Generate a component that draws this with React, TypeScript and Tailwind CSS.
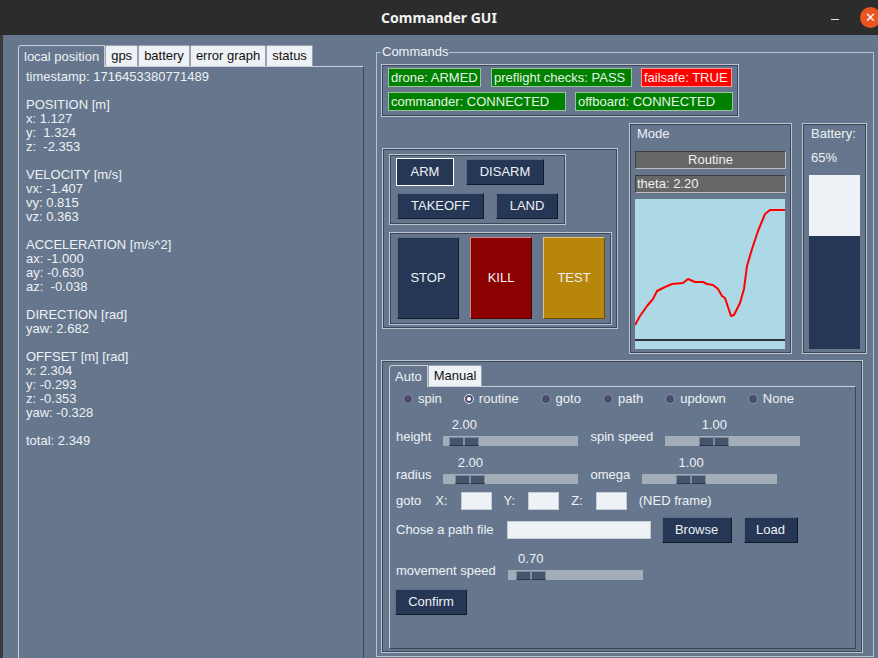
import React from 'react';

const leftLines = [
  'timestamp: 1716453380771489',
  '',
  'POSITION [m]',
  'x: 1.127',
  'y:  1.324',
  'z:  -2.353',
  '',
  'VELOCITY [m/s]',
  'vx: -1.407',
  'vy: 0.815',
  'vz: 0.363',
  '',
  'ACCELERATION [m/s^2]',
  'ax: -1.000',
  'ay: -0.630',
  'az:  -0.038',
  '',
  'DIRECTION [rad]',
  'yaw: 2.682',
  '',
  'OFFSET [m] [rad]',
  'x: 2.304',
  'y: -0.293',
  'z: -0.353',
  'yaw: -0.328',
  '',
  'total: 2.349',
];

const frame =
  'border border-[#bcc5cf] shadow-[inset_1px_1px_0_#3c4859,inset_-1px_-1px_0_#3c4859]';

const btn =
  'bg-[#263755] border border-[#5f6e87] border-r-[#121a2a] border-b-[#121a2a] text-[#eef1f5] flex items-center justify-center';

function StatusLabel({ text, width, red }: { text: string; width: string; red?: boolean }) {
  return (
    <div
      className={`${width} h-[19px] pl-[2px] flex items-center whitespace-nowrap border ${
        red ? 'bg-[#ff0000] border-[#ff9a9a] text-[#fff0f0]' : 'bg-[#008000] border-[#9cc49c] text-[#e6f6e6]'
      }`}
    >
      {text}
    </div>
  );
}

function Slider({ value, offset }: { value: string; offset: string }) {
  return (
    <div className="w-[135px] flex flex-col">
      <div className={`${offset} w-[30px] text-center`}>{value}</div>
      <div className="mt-[4px] h-[10px] bg-[#a3adb8] flex items-end">
        <div className={`${offset} w-[30px] h-[9px] flex`}>
          <div className="flex-1 bg-[#46546b] border border-[#7d8aa0] border-b-[#2b3547]" />
          <div className="flex-1 bg-[#46546b] border border-[#7d8aa0] border-b-[#2b3547]" />
        </div>
      </div>
    </div>
  );
}

function Radio({ label, on }: { label: string; on?: boolean }) {
  return (
    <div className="flex items-center">
      <div
        className={`w-[10px] h-[10px] rounded-full border flex items-center justify-center ${
          on ? 'bg-[#4b4d70] border-[#e4e7ee]' : 'bg-[#4b4d70] border-[#8a8fa8]'
        }`}
      >
        {on && <div className="w-[4px] h-[4px] rounded-full bg-white" />}
      </div>
      <span className="ml-[5px]">{label}</span>
    </div>
  );
}

function Graph() {
  const pts =
    '0,126 5,117 12,107 18,100 22,92 30,88 37,85 48,84 53,80 60,83 68,83 72,85 78,86 83,90 87,97 90,99 96,117 99,116 105,104 109,90 112,67 117,50 123,32 130,15 135,11 150,11';
  return (
    <svg width="150" height="150" viewBox="0 0 150 150" className="block bg-[#add8e6]">
      <line x1="0" y1="141" x2="150" y2="141" stroke="#000" strokeWidth="1.5" />
      <polyline points={pts} fill="none" stroke="#ff0000" strokeWidth="2" strokeLinejoin="round" />
    </svg>
  );
}

export default function App() {
  return (
    <div className="w-[878px] h-[658px] overflow-hidden flex flex-col bg-[#2c2c2c] font-['Liberation_Sans',Arial,sans-serif] text-[13px] leading-[14px] text-[#eef1f5]">
      {/* title bar */}
      <div className="h-[35px] shrink-0 grid grid-cols-[1fr_auto_1fr] items-center">
        <div />
        <div className="font-['Noto_Sans',sans-serif] font-bold text-[14px] text-[#f2f2f2]">Commander GUI</div>
        <div className="flex items-center justify-end">
          <div className="w-[8px] h-[1.5px] bg-[#e8e8e8] mt-[4px]" />
          <div className="ml-[21px] mr-[-3px] w-[21px] h-[21px] rounded-full bg-[#e95420] flex items-center justify-center text-white text-[13px] font-['DejaVu_Sans',sans-serif]">
            ✕
          </div>
        </div>
      </div>

      <div className="flex-1 min-h-0 flex bg-[#66778d] border-l-[3px] border-[#3b3b3b]">
        {/* left notebook */}
        <div className="ml-[15px] mt-[10px] w-[346px] flex flex-col">
          <div className="flex items-start h-[21px]">
            <div className="relative z-10 h-[22px] px-[5px] flex items-center bg-[#66778d] border border-b-0 border-[#c9d0d8] rounded-tl-[3px]">
              local position
            </div>
            {['gps', 'battery', 'error graph', 'status'].map((t) => (
              <div
                key={t}
                className="h-[21px] px-[5px] flex items-center bg-[#eef1f5] text-[#111] border border-b-0 border-[#9aa4b0] rounded-t-[2px]"
              >
                {t}
              </div>
            ))}
          </div>
          <div className="flex-1 border border-b-0 border-[#c9d0d8] border-r-[#3a4556] pl-[7px] pt-[3px]">
            {leftLines.map((l, i) => (
              <div key={i} className="h-[14px] whitespace-pre">
                {l}
              </div>
            ))}
          </div>
        </div>

        {/* commands */}
        <fieldset className="ml-[12px] mt-[10px] mb-[1px] w-[498px] border border-[#b9c2cc] pl-[4px] pr-[5px] pt-[5px] pb-[3px] flex flex-col">
          <legend className="px-[1px] leading-[14px]">Commands</legend>

          <div className={`${frame} w-[358px] h-[53px] pl-[6px] pt-[3px] flex flex-col gap-[5px]`}>
            <div className="flex">
              <StatusLabel text="drone: ARMED" width="w-[93px]" />
              <div className="ml-[10px]">
                <StatusLabel text="preflight checks: PASS" width="w-[141px]" />
              </div>
              <div className="ml-[9px]">
                <StatusLabel text="failsafe: TRUE" width="w-[91px]" red />
              </div>
            </div>
            <div className="flex">
              <StatusLabel text="commander: CONNECTED" width="w-[178px]" />
              <div className="ml-[9px]">
                <StatusLabel text="offboard: CONNECTED" width="w-[158px]" />
              </div>
            </div>
          </div>

          <div className="mt-[6px] h-[231px] flex items-center">
            {/* controls */}
            <div className={`${frame} ml-[1px] w-[236px] h-[181px] pl-[6px] pt-[5px] flex flex-col`}>
              <div className={`${frame} w-[177px] h-[71px] pl-[6px] pt-[3px] flex flex-col`}>
                <div className="flex items-center h-[28px]">
                  <div className={`${btn} w-[58px] h-[28px] border-white border-r-white border-b-white`}>ARM</div>
                  <div className={`${btn} ml-[12px] w-[78px] h-[26px]`}>DISARM</div>
                </div>
                <div className="flex items-center mt-[7px]">
                  <div className={`${btn} ml-[1px] w-[87px] h-[26px]`}>TAKEOFF</div>
                  <div className={`${btn} ml-[12px] w-[62px] h-[26px]`}>LAND</div>
                </div>
              </div>
              <div className={`${frame} mt-[7px] w-[223px] h-[93px] pl-[7px] pt-[4px] flex gap-[11px]`}>
                <div className={`${btn} w-[62px] h-[82px]`}>STOP</div>
                <div className="w-[62px] h-[82px] bg-[#8b0000] border border-[#c98a8a] border-r-[#4a0000] border-b-[#4a0000] flex items-center justify-center">
                  KILL
                </div>
                <div className="w-[62px] h-[82px] bg-[#b8860b] border border-[#e6c47a] border-r-[#6b4d00] border-b-[#6b4d00] flex items-center justify-center">
                  TEST
                </div>
              </div>
            </div>

            {/* mode */}
            <div className={`${frame} ml-[11px] w-[163px] h-[231px] px-[5px] pt-[3px] flex flex-col`}>
              <div className="pl-[2px] h-[14px]">Mode</div>
              <div className="mt-[10px] h-[18px] bg-[#666666] border border-[#3e3e3e] border-r-[#bdbdbd] border-b-[#bdbdbd] flex items-center justify-center">
                Routine
              </div>
              <div className="mt-[6px] h-[18px] bg-[#666666] border border-[#3e3e3e] border-r-[#bdbdbd] border-b-[#bdbdbd] flex items-center pl-[1px]">
                theta: 2.20
              </div>
              <div className="mt-[6px]">
                <Graph />
              </div>
            </div>

            {/* battery */}
            <div className={`${frame} ml-[10px] w-[65px] h-[231px] pl-[6px] pt-[3px] flex flex-col`}>
              <div className="pl-[2px] h-[14px]">Battery:</div>
              <div className="pl-[2px] mt-[10px] h-[14px]">65%</div>
              <div className="mt-[10px] w-[51px] h-[174px] flex flex-col">
                <div className="h-[61px] bg-[#eef2f7]" />
                <div className="flex-1 bg-[#263755]" />
              </div>
            </div>
          </div>

          {/* lower notebook */}
          <div className={`${frame} mt-[6px] w-[482px] h-[293px] pl-[7px] pr-[6px] pt-[4px] pb-[3px] flex flex-col`}>
            <div className="flex items-start h-[21px]">
              <div className="relative z-10 h-[22px] px-[5px] flex items-center bg-[#66778d] border border-b-0 border-[#c9d0d8] rounded-tl-[3px]">
                Auto
              </div>
              <div className="h-[21px] px-[5px] flex items-center bg-[#eef1f5] text-[#111] border border-b-0 border-[#9aa4b0] rounded-t-[2px]">
                Manual
              </div>
            </div>
            <div className="flex-1 border border-[#c9d0d8] border-r-[#3a4556] border-b-[#3a4556] pl-[6px] pt-[5px] flex flex-col">
              <div className="pl-[7px] h-[14px] flex items-center gap-[22px]">
                <Radio label="spin" />
                <Radio label="routine" on />
                <Radio label="goto" />
                <Radio label="path" />
                <Radio label="updown" />
                <Radio label="None" />
              </div>

              <div className="mt-[12px] flex items-end gap-[12px]">
                <span className="mb-[2px]">height</span>
                <Slider value="2.00" offset="ml-[6px]" />
                <span className="mb-[2px]">spin speed</span>
                <Slider value="1.00" offset="ml-[34px]" />
              </div>

              <div className="mt-[10px] flex items-end gap-[12px]">
                <span className="mb-[2px]">radius</span>
                <Slider value="2.00" offset="ml-[12px]" />
                <span className="mb-[2px]">omega</span>
                <Slider value="1.00" offset="ml-[34px]" />
              </div>

              <div className="mt-[8px] h-[18px] flex items-center">
                <span>goto</span>
                <span className="ml-[14px]">X:</span>
                <div className="ml-[13px] w-[31px] h-[18px] bg-[#eef2f7] border border-[#c4ccd6]" />
                <span className="ml-[12px]">Y:</span>
                <div className="ml-[13px] w-[31px] h-[18px] bg-[#eef2f7] border border-[#c4ccd6]" />
                <span className="ml-[12px]">Z:</span>
                <div className="ml-[13px] w-[31px] h-[18px] bg-[#eef2f7] border border-[#c4ccd6]" />
                <span className="ml-[12px]">(NED frame)</span>
              </div>

              <div className="mt-[7px] h-[26px] flex items-center">
                <span>Chose a path file</span>
                <div className="ml-[13px] w-[144px] h-[18px] bg-[#eef2f7] border border-[#c4ccd6]" />
                <div className={`${btn} ml-[11px] w-[70px] h-[26px]`}>Browse</div>
                <div className={`${btn} ml-[12px] w-[54px] h-[26px]`}>Load</div>
              </div>

              <div className="mt-[9px] flex items-end gap-[12px]">
                <span className="mb-[2px]">movement speed</span>
                <Slider value="0.70" offset="ml-[8px]" />
              </div>

              <div className={`${btn} mt-[9px] w-[72px] h-[26px] ml-[-1px]`}>Confirm</div>
            </div>
          </div>
        </fieldset>
      </div>
    </div>
  );
}
